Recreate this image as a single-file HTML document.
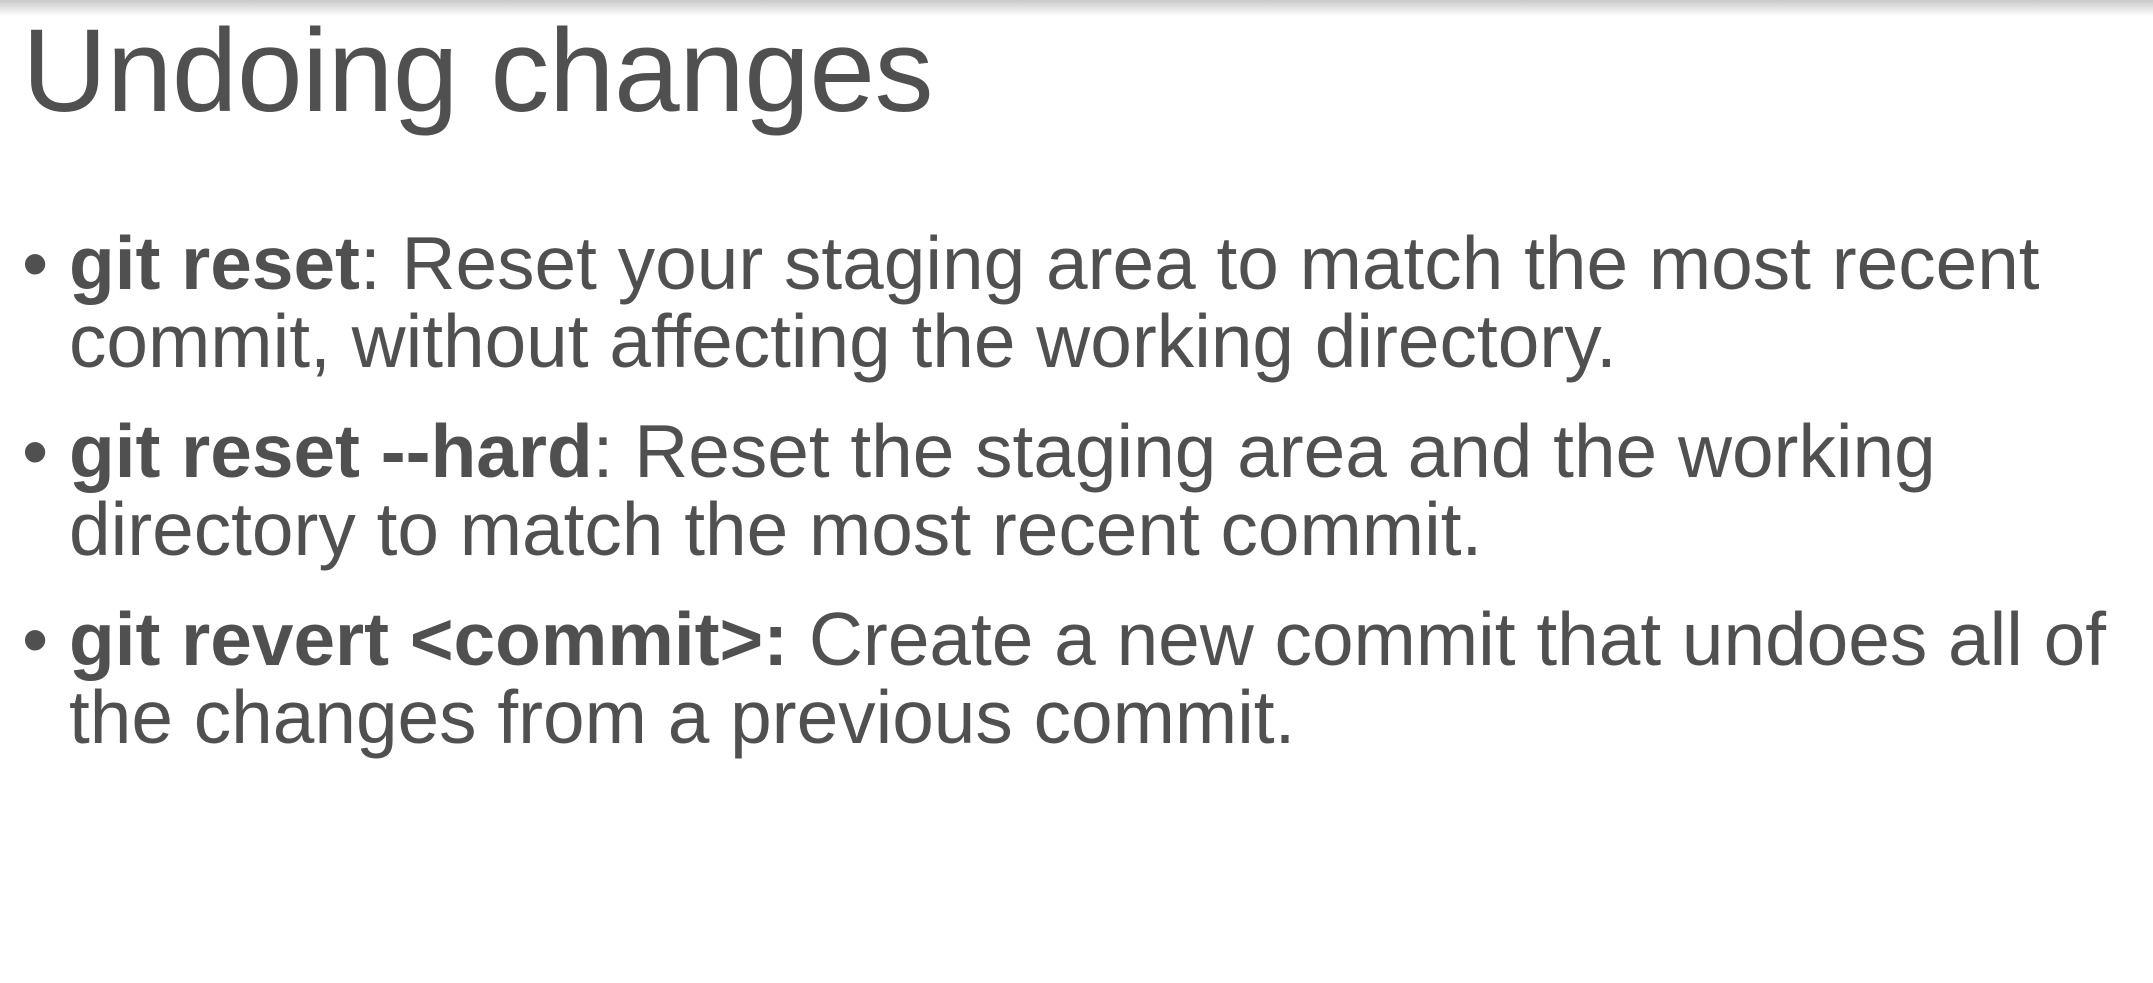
<!DOCTYPE html>
<html><head><meta charset="utf-8"><style>
html,body{margin:0;padding:0;width:2153px;height:983px;background:#fff;overflow:hidden}
body{font-family:"Liberation Sans",Arial,sans-serif;color:#505050;position:relative}
.shadow{position:absolute;left:0;top:0;width:100%;height:16px;background:linear-gradient(#c8c8c8,#fff)}
.l{position:absolute;white-space:nowrap;line-height:1}
.t{font-size:118px;left:22px;top:12px;letter-spacing:-0.5px}
.b{font-size:74.8px;left:69px}
.d{position:absolute;font-size:74.8px;left:22px;line-height:1}
b{font-weight:bold}
</style></head><body>
<div class="shadow"></div>
<div class="l t">Undoing changes</div>
<div class="d" style="top:226px">•</div>
<div class="l b" style="top:226px"><b>git reset</b>: Reset your staging area to match the most recent</div>
<div class="l b" style="top:304px">commit, without affecting the working directory.</div>
<div class="d" style="top:414px">•</div>
<div class="l b" style="top:414px"><b>git reset --hard</b>: Reset the staging area and the working</div>
<div class="l b" style="top:492px">directory to match the most recent commit.</div>
<div class="d" style="top:602px">•</div>
<div class="l b" style="top:602px"><b>git revert &lt;commit&gt;:</b> Create a new commit that undoes all of</div>
<div class="l b" style="top:680px">the changes from a previous commit.</div>
</body></html>
